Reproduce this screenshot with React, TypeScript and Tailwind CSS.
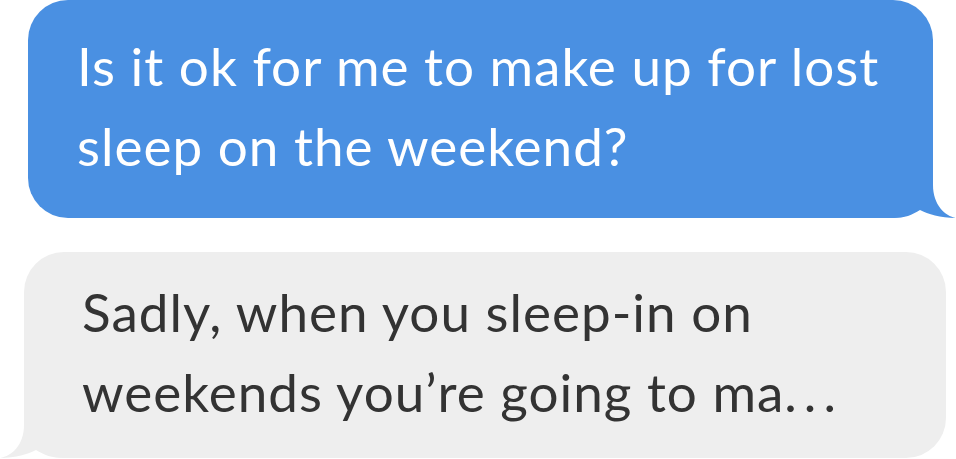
import React from 'react';

// Chat bubbles: outgoing (blue, tail bottom-right) and incoming (gray, tail bottom-left)
const font = { fontFamily: 'Lato, "Open Sans", sans-serif' };

const App: React.FC = () => {
  return (
    <div className="w-[956px] h-[459px] bg-white overflow-hidden flex flex-col" style={font}>
      {/* Outgoing */}
      <div className="relative ml-[28px] w-[905px] h-[218px]">
        <div className="absolute inset-0 rounded-[40px] bg-[#4a90e2]" />
        <svg className="absolute left-[865px] top-[170px]" width="63" height="48" viewBox="0 0 63 48">
          <path d="M0 0 L40 0 L40 15 C40 35 52 46 63 48 C47 48 35 44 27 40 C19 45 12 48 0 48 Z" fill="#4a90e2" />
        </svg>
        <p className="relative pl-[49px] pt-[26px] text-[53px] leading-[80px] text-white tracking-[1px]">
          Is it ok for me to make up for lost
          <br />
          sleep on the weekend?
        </p>
      </div>

      {/* Incoming */}
      <div className="relative mt-[34px] ml-[24px] w-[922px] h-[206px]">
        <div className="absolute inset-0 rounded-[40px] bg-[#eeeeee]" />
        <svg className="absolute left-[-24px] top-[158px]" width="64" height="48" viewBox="0 0 64 48">
          <path d="M64 0 L24 0 L24 15 C24 35 12 46 0 48 C16 48 28 44 36 40 C44 45 52 48 64 48 Z" fill="#eeeeee" />
        </svg>
        <p className="relative pl-[58px] pt-[20px] text-[53px] leading-[80px] text-[#333333] tracking-[1px]">
          Sadly, when you sleep-in on
          <br />
          weekends you’re going to ma<span className="tracking-[7px]">...</span>
        </p>
      </div>
    </div>
  );
};

export default App;
